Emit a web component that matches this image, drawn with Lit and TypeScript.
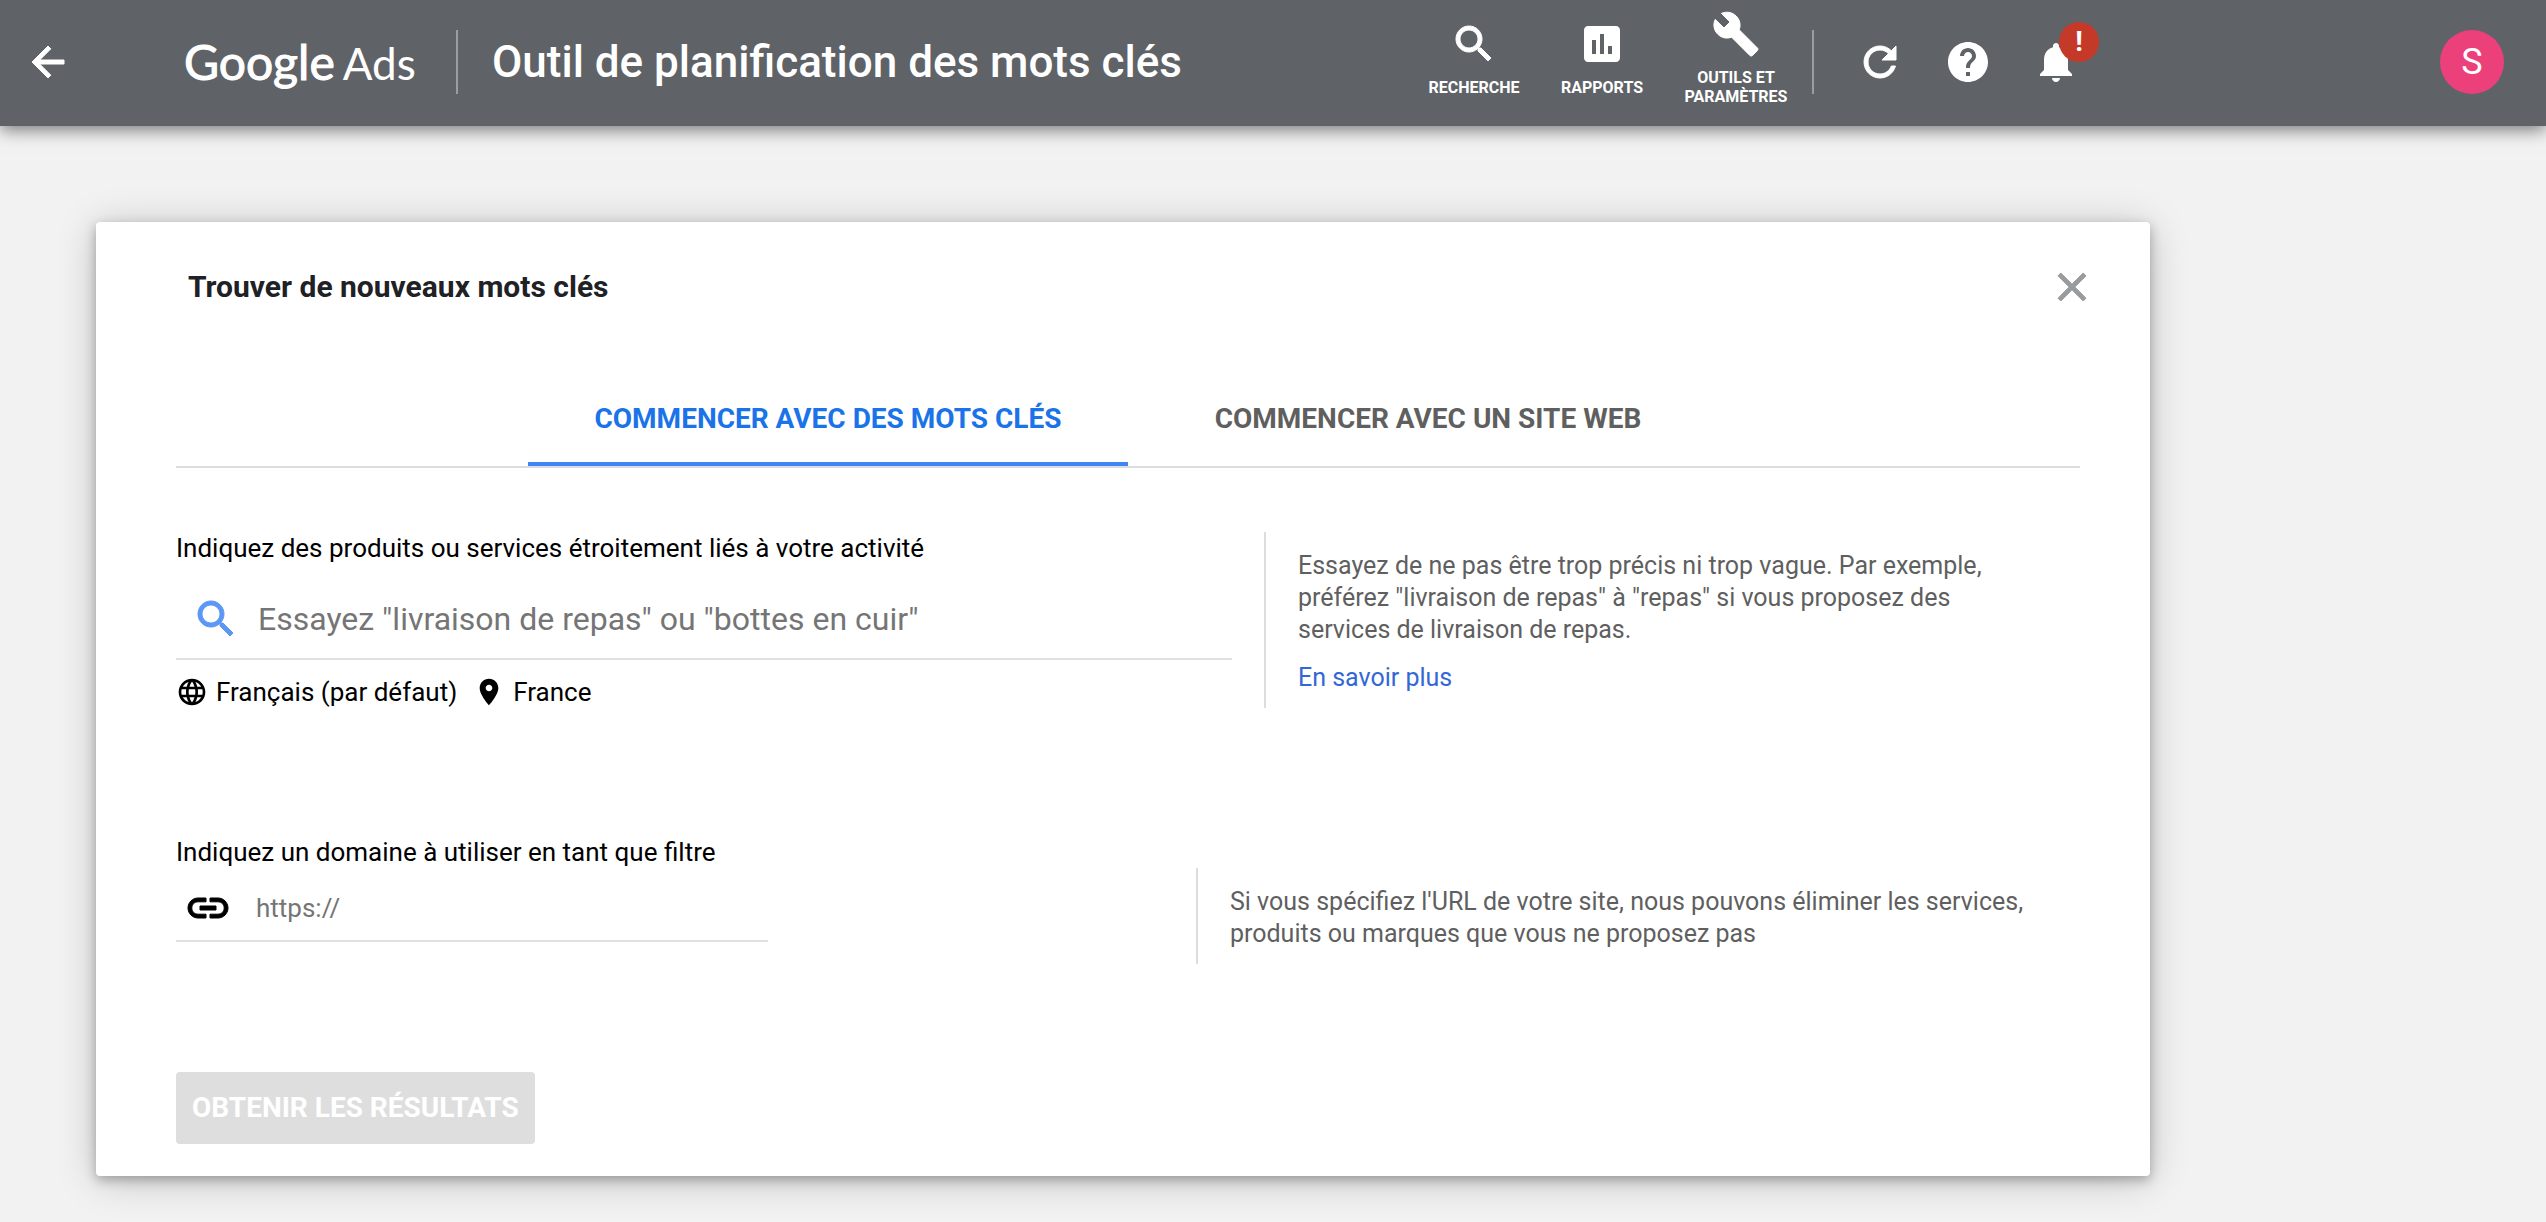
import { LitElement, html, css, svg } from "lit";
import { customElement, property, state } from "lit/decorators.js";
import { classMap } from "lit/directives/class-map.js";

const ICONS: Record<string, string> = {
  back: "M20 11H7.83l5.59-5.59L12 4l-8 8 8 8 1.41-1.41L7.83 13H20v-2z",
  search:
    "M15.5 14h-.79l-.28-.27C15.41 12.59 16 11.11 16 9.5 16 5.91 13.09 3 9.5 3S3 5.91 3 9.5 5.91 16 9.5 16c1.61 0 3.09-.59 4.23-1.57l.27.28v.79l5 4.99L20.49 19l-4.99-5zm-6 0C7.01 14 5 11.99 5 9.5S7.01 5 9.5 5 14 7.01 14 9.5 11.99 14 9.5 14z",
  reports:
    "M19 3H5c-1.1 0-2 .9-2 2v14c0 1.1.9 2 2 2h14c1.1 0 2-.9 2-2V5c0-1.1-.9-2-2-2zM9 17H7v-7h2v7zm4 0h-2V7h2v10zm4 0h-2v-4h2v4z",
  tools:
    "M22.7 19l-9.1-9.1c.9-2.3.4-5-1.5-6.9-2-2-5-2.4-7.4-1.3L9 6 6 9 1.6 4.7C.4 7.1.9 10.1 2.9 12.1c1.9 1.9 4.6 2.4 6.9 1.5l9.1 9.1c.4.4 1 .4 1.4 0l2.3-2.3c.5-.4.5-1.1.1-1.4z",
  refresh:
    "M17.65 6.35C16.2 4.9 14.21 4 12 4c-4.42 0-7.99 3.58-7.99 8s3.57 8 7.99 8c3.73 0 6.84-2.55 7.73-6h-2.08c-.82 2.33-3.04 4-5.65 4-3.31 0-6-2.69-6-6s2.69-6 6-6c1.66 0 3.14.69 4.22 1.78L13 11h7V4l-2.35 2.35z",
  help: "M12 2C6.48 2 2 6.48 2 12s4.48 10 10 10 10-4.48 10-10S17.52 2 12 2zm1 17h-2v-2h2v2zm2.07-7.75l-.9.92C13.45 12.9 13 13.5 13 15h-2v-.5c0-1.1.45-2.1 1.17-2.83l1.24-1.26c.37-.36.59-.86.59-1.41 0-1.1-.9-2-2-2s-2 .9-2 2H8c0-2.21 1.79-4 4-4s4 1.79 4 4c0 .88-.36 1.68-.93 2.25z",
  bell: "M12 22c1.1 0 2-.9 2-2h-4c0 1.1.89 2 2 2zm6-6v-5c0-3.07-1.64-5.64-4.5-6.32V4c0-.83-.67-1.5-1.5-1.5s-1.5.67-1.5 1.5v.68C7.63 5.36 6 7.92 6 11v5l-2 2v1h16v-1l-2-2z",
  close:
    "M19 6.41L17.59 5 12 10.59 6.41 5 5 6.41 10.59 12 5 17.59 6.41 19 12 13.41 17.59 19 19 17.59 13.41 12z",
  globe:
    "M11.99 2C6.47 2 2 6.48 2 12s4.47 10 9.99 10C17.52 22 22 17.52 22 12S17.52 2 11.99 2zm6.93 6h-2.95c-.32-1.25-.78-2.45-1.38-3.56 1.84.63 3.37 1.91 4.33 3.56zM12 4.04c.83 1.2 1.48 2.53 1.91 3.96h-3.82c.43-1.43 1.08-2.76 1.91-3.96zM4.26 14C4.1 13.36 4 12.69 4 12s.1-1.36.26-2h3.38c-.08.66-.14 1.32-.14 2 0 .68.06 1.34.14 2H4.26zm.82 2h2.95c.32 1.25.78 2.45 1.38 3.56-1.84-.63-3.37-1.9-4.33-3.56zm2.95-8H5.08c.96-1.66 2.49-2.93 4.33-3.56C8.81 5.55 8.35 6.75 8.03 8zM12 19.96c-.83-1.2-1.48-2.53-1.91-3.96h3.82c-.43 1.43-1.08 2.76-1.91 3.96zM14.34 14H9.66c-.09-.66-.16-1.32-.16-2 0-.68.07-1.35.16-2h4.68c.09.65.16 1.32.16 2 0 .68-.07 1.34-.16 2zm.25 5.56c.6-1.11 1.06-2.31 1.38-3.56h2.95c-.96 1.65-2.49 2.93-4.33 3.56zM16.36 14c.08-.66.14-1.32.14-2 0-.68-.06-1.34-.14-2h3.38c.16.64.26 1.31.26 2s-.1 1.36-.26 2h-3.38z",
  pin: "M12 2C8.13 2 5 5.13 5 9c0 5.25 7 13 7 13s7-7.75 7-13c0-3.87-3.13-7-7-7zm0 9.5c-1.38 0-2.5-1.12-2.5-2.5s1.12-2.5 2.5-2.5 2.5 1.12 2.5 2.5-1.12 2.5-2.5 2.5z",
  link: "M3.9 12c0-1.71 1.39-3.1 3.1-3.1h4V7H7c-2.76 0-5 2.24-5 5s2.24 5 5 5h4v-1.9H7c-1.71 0-3.1-1.39-3.1-3.1zM8 13h8v-2H8v2zm9-6h-4v1.9h4c1.71 0 3.1 1.39 3.1 3.1s-1.39 3.1-3.1 3.1h-4V17h4c2.76 0 5-2.24 5-5s-2.24-5-5-5z",
};

const BOLD = new Set(["back", "search", "tools", "refresh", "close", "link"]);

@customElement("ads-icon")
export class AdsIcon extends LitElement {
  @property() name = "search";

  static styles = css`
    :host {
      display: block;
      flex: none;
      width: 48px;
      height: 48px;
    }
    .glyph {
      display: block;
      width: 100%;
      height: 100%;
      fill: currentColor;
    }
    .bold {
      stroke: currentColor;
      stroke-width: 0.5;
      stroke-linejoin: round;
    }
  `;

  render() {
    return html`<svg class=${classMap({ glyph: true, bold: BOLD.has(this.name) })} viewBox="0 0 24 24" aria-hidden="true">
      ${svg`<path d=${ICONS[this.name]}></path>`}
    </svg>`;
  }
}

@customElement("ads-header")
export class AdsHeader extends LitElement {
  static styles = css`
    :host {
      display: block;
      position: relative;
      z-index: 1;
    }
    .bar {
      display: flex;
      align-items: center;
      box-sizing: border-box;
      min-height: 126px;
      padding: 0 42px 2px 24px;
      background: #5f6368;
      color: #fff;
      box-shadow: 0 4px 16px rgba(0, 0, 0, 0.5);
    }
    .plain {
      display: block;
      flex: none;
      margin: 0;
      padding: 0;
      border: 0;
      background: none;
      color: inherit;
      font: inherit;
      cursor: pointer;
    }
    .logo {
      display: flex;
      align-items: baseline;
      gap: 8px;
      box-sizing: border-box;
      min-width: 272px;
      margin-left: 112px;
      color: inherit;
      font-family: Lato, "Liberation Sans", sans-serif;
      text-decoration: none;
      white-space: nowrap;
    }
    .google {
      font-size: 48px;
      line-height: 56px;
      -webkit-text-stroke: 1px currentColor;
    }
    .ads {
      font-size: 44px;
      line-height: 56px;
    }
    .rule {
      flex: none;
      width: 2px;
      height: 64px;
      background: #9a9da1;
    }
    .title {
      margin: 0 0 0 34px;
      font-size: 44px;
      font-weight: 500;
      line-height: 56px;
      white-space: nowrap;
    }
    .nav {
      display: flex;
      align-items: center;
      margin-left: auto;
      padding-right: 6px;
      padding-bottom: 8px;
    }
    .item {
      display: flex;
      flex-direction: column;
      align-items: center;
      gap: 10px;
      width: 128px;
      font-size: 16px;
      font-weight: 700;
      line-height: 19px;
      text-align: center;
      text-transform: uppercase;
    }
    .item.wide {
      width: 140px;
      padding: 0 12px;
      box-sizing: border-box;
    }
    .tools {
      display: flex;
      align-items: center;
      gap: 40px;
      margin-left: 42px;
    }
    .alert {
      position: relative;
    }
    .badge {
      position: absolute;
      top: -16px;
      left: 27px;
      width: 40px;
      height: 40px;
      border-radius: 50%;
      background: #c53929;
      font-size: 28px;
      font-weight: 700;
      line-height: 40px;
      text-align: center;
    }
    .avatar {
      width: 64px;
      height: 64px;
      margin-left: 360px;
      border-radius: 50%;
      background: #ec407a;
      font-size: 36px;
      line-height: 64px;
      text-align: center;
    }
  `;

  render() {
    return html`
      <header class="bar">
        <button class="plain" aria-label="Retour"><ads-icon name="back"></ads-icon></button>
        <a class="logo" href="#"><span class="google">Google</span><span class="ads">Ads</span></a>
        <span class="rule"></span>
        <h1 class="title">Outil de planification des mots clés</h1>
        <nav class="nav">
          <button class="plain item"><ads-icon name="search"></ads-icon>Recherche</button>
          <button class="plain item"><ads-icon name="reports"></ads-icon>Rapports</button>
          <button class="plain item wide"><ads-icon name="tools"></ads-icon>Outils et paramètres</button>
        </nav>
        <span class="rule"></span>
        <div class="tools">
          <button class="plain" aria-label="Actualiser"><ads-icon name="refresh"></ads-icon></button>
          <button class="plain" aria-label="Aide"><ads-icon name="help"></ads-icon></button>
          <button class="plain alert" aria-label="Notifications">
            <ads-icon name="bell"></ads-icon><span class="badge">!</span>
          </button>
        </div>
        <button class="plain avatar" aria-label="Compte">S</button>
      </header>
    `;
  }
}

@customElement("keyword-card")
export class KeywordCard extends LitElement {
  @state() private tab = 0;

  private tabs = ["Commencer avec des mots clés", "Commencer avec un site web"];

  static styles = css`
    :host {
      display: block;
    }
    .card {
      padding: 40px 70px 32px 80px;
      border-radius: 4px;
      background: #fff;
      box-shadow: 0 4px 12px rgba(0, 0, 0, 0.28), 0 4px 40px rgba(0, 0, 0, 0.2);
    }
    .head {
      display: flex;
      align-items: center;
      justify-content: space-between;
      padding-left: 12px;
    }
    .heading {
      margin: 0;
      color: #202124;
      font-size: 30px;
      font-weight: 700;
      line-height: 50px;
    }
    .plain {
      display: block;
      margin: 0;
      padding: 0;
      border: 0;
      background: none;
      color: inherit;
      font: inherit;
      cursor: pointer;
    }
    .close {
      margin-right: -16px;
      color: #999c9f;
    }
    .tabs {
      display: flex;
      justify-content: center;
      margin-top: 66px;
      border-bottom: 2px solid #dadce0;
    }
    .tab {
      flex: 0 1 600px;
      height: 88px;
      padding-bottom: 2px;
      color: #5f5f5f;
      font-size: 28px;
      font-weight: 700;
      line-height: 82px;
      text-transform: uppercase;
      border-bottom: 4px solid transparent;
    }
    .tab.active {
      color: #1a73e8;
      border-bottom-color: #4285f4;
    }
    .row {
      display: grid;
    }
    .keywords {
      grid-template-columns: 1056fr 816fr;
      gap: 32px;
      margin-top: 64px;
    }
    .domain {
      grid-template-columns: 1020fr 884fr;
      margin-top: 128px;
    }
    .label {
      display: block;
      color: #000;
      font-size: 26px;
      line-height: 32px;
    }
    .field {
      display: flex;
      align-items: center;
      border-bottom: 2px solid #e0e0e0;
    }
    .input {
      flex: 1;
      min-width: 0;
      padding: 0;
      border: 0;
      outline: 0;
      background: none;
      color: #202124;
      font: inherit;
    }
    .input::placeholder {
      color: #757575;
      opacity: 1;
    }
    .field.query {
      gap: 18px;
      height: 78px;
      margin-top: 16px;
      padding-left: 16px;
      font-size: 32px;
    }
    .query .lens {
      color: #5c97f5;
    }
    .targets {
      display: flex;
      gap: 16px;
      margin-top: 16px;
    }
    .target {
      display: flex;
      align-items: center;
      gap: 8px;
      color: #000;
      font-size: 26px;
      line-height: 32px;
    }
    .target ads-icon {
      width: 32px;
      height: 32px;
    }
    .field.site {
      gap: 24px;
      width: 592px;
      max-width: 100%;
      height: 66px;
      margin-top: 8px;
      padding-left: 8px;
      box-sizing: border-box;
      font-size: 26px;
    }
    .site .chain {
      color: #000;
    }
    .note {
      box-sizing: border-box;
      border-left: 2px solid #dadce0;
      padding: 18px 32px 14px;
      color: #5f5f5f;
      font-size: 25px;
      line-height: 32px;
    }
    .note p {
      margin: 0;
    }
    .keywords .note {
      min-height: 176px;
      padding-right: 72px;
    }
    .domain .note {
      align-self: start;
      min-height: 96px;
      margin-top: 32px;
    }
    .more {
      display: inline-block;
      margin-top: 16px;
      color: #3367d6;
      text-decoration: none;
    }
    .submit {
      display: block;
      height: 72px;
      margin: 108px 0 0;
      padding: 0 16px;
      border: 0;
      border-radius: 4px;
      background: #dedede;
      color: #fff;
      font: inherit;
      font-size: 28px;
      font-weight: 700;
      line-height: 72px;
      text-transform: uppercase;
    }
  `;

  render() {
    return html`
      <section class="card">
        <div class="head">
          <h2 class="heading">Trouver de nouveaux mots clés</h2>
          <button class="plain close" aria-label="Fermer"><ads-icon name="close"></ads-icon></button>
        </div>
        <div class="tabs" role="tablist">
          ${this.tabs.map(
            (label, i) => html`<button
              class=${classMap({ plain: true, tab: true, active: this.tab === i })}
              role="tab"
              aria-selected=${this.tab === i ? "true" : "false"}
              @click=${() => (this.tab = i)}
            >${label}</button>`
          )}
        </div>
        <div class="row keywords">
          <div>
            <label class="label" for="query">Indiquez des produits ou services étroitement liés à votre activité</label>
            <div class="field query">
              <ads-icon class="lens" name="search"></ads-icon>
              <input class="input" id="query" type="text" placeholder='Essayez "livraison de repas" ou "bottes en cuir"' />
            </div>
            <div class="targets">
              <button class="plain target"><ads-icon name="globe"></ads-icon>Français (par défaut)</button>
              <button class="plain target"><ads-icon name="pin"></ads-icon>France</button>
            </div>
          </div>
          <div class="note">
            <p>Essayez de ne pas être trop précis ni trop vague. Par exemple, préférez "livraison de repas" à "repas" si vous proposez des services de livraison de repas.</p>
            <a class="more" href="#">En savoir plus</a>
          </div>
        </div>
        <div class="row domain">
          <div>
            <label class="label" for="site">Indiquez un domaine à utiliser en tant que filtre</label>
            <div class="field site">
              <ads-icon class="chain" name="link"></ads-icon>
              <input class="input" id="site" type="text" placeholder="https://" />
            </div>
          </div>
          <div class="note">
            <p>Si vous spécifiez l'URL de votre site, nous pouvons éliminer les services, produits ou marques que vous ne proposez pas</p>
          </div>
        </div>
        <button class="submit" disabled>Obtenir les résultats</button>
      </section>
    `;
  }
}

@customElement("app-root")
export class AppRoot extends LitElement {
  static styles = css`
    :host {
      display: block;
      min-height: 100vh;
      background: #f2f2f2;
      font-family: Roboto, "Liberation Sans", sans-serif;
    }
    .page {
      padding: 96px 396px 44px 96px;
    }
  `;

  render() {
    return html`
      <ads-header></ads-header>
      <main class="page"><keyword-card></keyword-card></main>
    `;
  }
}
